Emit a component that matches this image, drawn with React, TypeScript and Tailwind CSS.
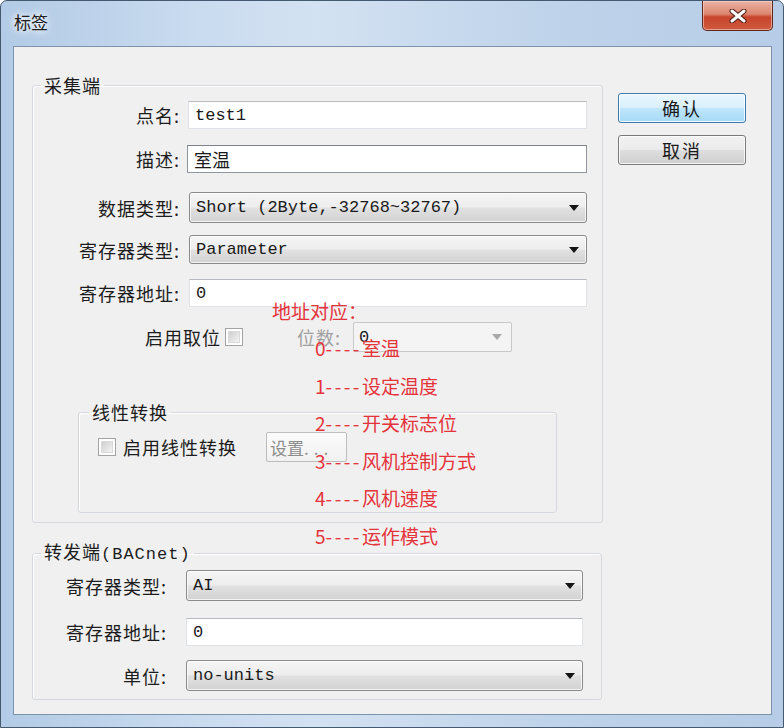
import React from "react";

const MONO = "font-['Liberation_Mono',monospace] text-[17px] leading-none text-[#1a1a1a] whitespace-pre";

function Arrow({ disabled }: { disabled?: boolean }) {
  return (
    <svg width="10" height="6" viewBox="0 0 10 6" className="shrink-0">
      <path d="M0 0 H10 L5 6 Z" fill={disabled ? "#a9a9a9" : "#151515"} />
    </svg>
  );
}

function Combo({ value, cls }: { value: string; cls: string }) {
  return (
    <div
      className={`${cls} shrink-0 rounded-[3px] border border-[#8a8a8a] bg-[linear-gradient(to_bottom,#f5f5f5_0%,#ededed_48%,#e1e1e1_52%,#d2d2d2_100%)] shadow-[inset_0_0_0_1px_rgba(255,255,255,0.75)] flex items-center pl-[6px] pr-[7px]`}
    >
      <span className={`flex-1 ${MONO}`}>{value}</span>
      <Arrow />
    </div>
  );
}

function Input({ value, cls, mono = true, focused = false }: { value: string; cls: string; mono?: boolean; focused?: boolean }) {
  return (
    <div
      className={`${cls} shrink-0 bg-white border ${
        focused ? "border-[#8f969e] border-t-[#7b828a]" : "border-[#dfe3e8] border-t-[#b7bbc1]"
      } flex items-center pl-[6px]`}
    >
      {mono ? (
        <span className={MONO}>{value}</span>
      ) : (
        <span className="text-[18px] leading-none text-[#1a1a1a]">{value}</span>
      )}
    </div>
  );
}

function Label({ children, cls }: { children: React.ReactNode; cls: string }) {
  return (
    <span className={`${cls} shrink-0 text-right text-[18px] leading-[20px] text-[#1c1c1c] tracking-[1px]`}>
      {children}
    </span>
  );
}

function Check() {
  return (
    <div className="w-[18px] h-[18px] shrink-0 border border-[#a3a3a3] bg-white p-[2px]">
      <div className="w-full h-full bg-[linear-gradient(135deg,#cfcfcf,#f3f3f3)] border border-[#dadada]" />
    </div>
  );
}

export default function App() {
  const annotations = ["0----室温", "1----设定温度", "2----开关标志位", "3----风机控制方式", "4----风机速度", "5----运作模式"];
  return (
    <div className="w-[784px] h-[728px] relative overflow-hidden rounded-t-[7px] border border-[#455a70] bg-[linear-gradient(to_right,#b3cbe6_0%,#c9dbef_25%,#d3e2f2_40%,#bfd3ea_70%,#b7cde7_100%)] flex flex-col font-['Noto_Sans_CJK_SC','Noto_Sans',sans-serif]">
      {/* title bar */}
      <div className="h-[45px] shrink-0 flex items-start">
        <span className="ml-[13px] mt-[11px] text-[17px] leading-[20px] text-[#202020] [text-shadow:0_0_6px_#ffffff,0_0_10px_#ffffff]">
          标签
        </span>
        <div className="ml-auto mr-[10px] w-[71px] h-[30px] rounded-b-[5px] border border-[#5e2a20] border-t-0 bg-[linear-gradient(to_bottom,#eab3a3_0%,#dc8670_45%,#c8442c_55%,#cf5a3e_100%)] shadow-[inset_0_0_0_1px_rgba(255,220,210,0.55)] flex items-center justify-center">
          <svg width="18" height="14" viewBox="0 0 18 14">
            <path d="M3 2 L15 12 M15 2 L3 12" stroke="#4a1a12" strokeWidth="5" strokeLinecap="round" />
            <path d="M3 2 L15 12 M15 2 L3 12" stroke="#ffffff" strokeWidth="3" strokeLinecap="round" />
          </svg>
        </div>
      </div>

      {/* client area */}
      <div className="flex-1 min-h-0 flex pl-[12px] pr-[11px] pb-[12px]">
        <div className="flex-1 border border-[#7d92ab] bg-[#f0f0f0] flex items-start pl-[18px] pt-[28px]">
          {/* left column */}
          <div className="w-[571px] shrink-0 flex flex-col">
            <fieldset className="m-0 p-0 pb-[9px] min-w-0 border border-[#d5d9dd] rounded-[3px] shadow-[inset_1px_1px_0_#ffffff]">
              <legend className="ml-[8px] px-[3px] text-[18px] leading-[20px] text-[#1c1c1c] tracking-[1px]">采集端</legend>
              <div className="flex items-center mt-[6px]">
                <Label cls="w-[147px]">点名:</Label>
                <div className="w-[8px]" />
                <Input value="test1" cls="w-[399px] h-[28px]" />
              </div>
              <div className="flex items-center mt-[16px]">
                <Label cls="w-[147px]">描述:</Label>
                <div className="w-[7px]" />
                <Input value="室温" cls="w-[400px] h-[28px]" mono={false} focused />
              </div>
              <div className="flex items-center mt-[19px]">
                <Label cls="w-[147px]">数据类型:</Label>
                <div className="w-[9px]" />
                <Combo value="Short (2Byte,-32768~32767)" cls="w-[398px] h-[31px]" />
              </div>
              <div className="flex items-center mt-[12px]">
                <Label cls="w-[147px]">寄存器类型:</Label>
                <div className="w-[9px]" />
                <Combo value="Parameter" cls="w-[398px] h-[29px]" />
              </div>
              <div className="flex items-center mt-[15px]">
                <Label cls="w-[147px]">寄存器地址:</Label>
                <div className="w-[9px]" />
                <Input value="0" cls="w-[398px] h-[28px]" />
              </div>
              <div className="flex items-center mt-[15px] h-[30px]">
                <Label cls="w-[188px]">启用取位</Label>
                <div className="w-[4px]" />
                <Check />
                <span className="w-[54px]" />
                <span className="shrink-0 w-[56px] text-[18px] leading-[20px] text-[#a0a0a0] tracking-[1px]">位数:</span>
                <div className="w-[159px] h-[30px] shrink-0 rounded-[2px] border border-[#c9c9c9] bg-[#f4f4f4] flex items-center pl-[5px] pr-[9px]">
                  <span className={`flex-1 ${MONO}`}>0</span>
                  <Arrow disabled />
                </div>
              </div>

              <fieldset className="mt-[50px] ml-[45px] w-[479px] h-[111px] p-0 min-w-0 border border-[#d5d9dd] rounded-[3px] shadow-[inset_1px_1px_0_#ffffff]">
                <legend className="ml-[10px] px-[3px] text-[18px] leading-[20px] text-[#1c1c1c] tracking-[1px]">线性转换</legend>
                <div className="flex items-center mt-[10px] h-[30px]">
                  <div className="w-[19px]" />
                  <Check />
                  <span className="ml-[7px] w-[143px] shrink-0 text-[18px] leading-[20px] text-[#1c1c1c] tracking-[1px]">启用线性转换</span>
                  <div className="w-[81px] h-[30px] shrink-0 rounded-[2px] border border-[#bdbdbd] bg-[linear-gradient(to_bottom,#fbfbfb,#f1f1f1)] flex items-center pl-[3px]">
                    <span className="text-[17px] leading-none text-[#8c8c8c]">设置<span className="tracking-[5px]">...</span></span>
                  </div>
                </div>
              </fieldset>
            </fieldset>

            <fieldset className="mt-[18px] w-[570px] m-0 p-0 pb-[8px] min-w-0 border border-[#d5d9dd] rounded-[3px] shadow-[inset_1px_1px_0_#ffffff]">
              <legend className="ml-[8px] px-[3px] text-[18px] leading-[20px] text-[#1c1c1c] tracking-[1px]">
                转发端<span className="font-['Liberation_Mono',monospace] text-[17px] tracking-0">(BACnet)</span>
              </legend>
              <div className="flex items-center mt-[5px]">
                <Label cls="w-[134px]">寄存器类型:</Label>
                <div className="w-[19px]" />
                <Combo value="AI" cls="w-[397px] h-[31px]" />
              </div>
              <div className="flex items-center mt-[17px]">
                <Label cls="w-[134px]">寄存器地址:</Label>
                <div className="w-[19px]" />
                <Input value="0" cls="w-[397px] h-[28px]" />
              </div>
              <div className="flex items-center mt-[14px]">
                <Label cls="w-[134px]">单位:</Label>
                <div className="w-[19px]" />
                <Combo value="no-units" cls="w-[397px] h-[31px]" />
              </div>
            </fieldset>
          </div>

          {/* right column: buttons */}
          <div className="ml-[15px] mt-[18px] flex flex-col">
            <div className="w-[128px] h-[30px] rounded-[3px] border border-[#3d7bad] bg-[linear-gradient(to_bottom,#eaf6fd_0%,#d9f0fc_48%,#bee6fd_52%,#a7d9f5_100%)] shadow-[inset_0_0_0_1px_rgba(255,255,255,0.8)] flex items-center justify-center">
              <span className="text-[18px] leading-none text-[#1a1a1a] tracking-[2px]">确认</span>
            </div>
            <div className="mt-[12px] w-[128px] h-[30px] rounded-[3px] border border-[#7a7a7a] bg-[linear-gradient(to_bottom,#f2f2f2_0%,#ebebeb_48%,#dddddd_52%,#cfcfcf_100%)] shadow-[inset_0_0_0_1px_rgba(255,255,255,0.8)] flex items-center justify-center">
              <span className="text-[18px] leading-none text-[#1a1a1a] tracking-[2px]">取消</span>
            </div>
          </div>
        </div>
      </div>

      {/* red annotation overlay */}
      <div className="absolute left-[271px] top-[292px] flex flex-col text-[19px] text-[#e5333b] pointer-events-none">
        <span className="leading-[36px]">地址对应：</span>
        {annotations.map((t) => {
          const [num, rest] = t.split("----");
          return (
            <span key={t} className="ml-[43px] leading-[37.6px] whitespace-pre">
              {num}
              <span className="tracking-[2.5px]">----</span>
              {rest}
            </span>
          );
        })}
      </div>
    </div>
  );
}
